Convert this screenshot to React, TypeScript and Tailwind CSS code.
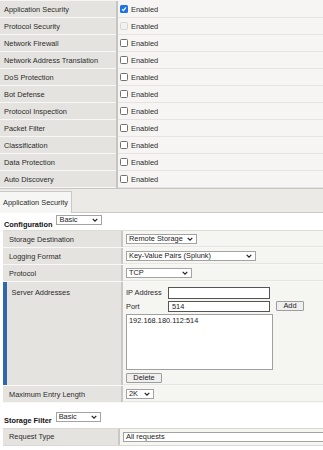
type BoxState = "checked" | "disabled" | "off";

const features: { name: string; state: BoxState }[] = [
  { name: "Application Security", state: "checked" },
  { name: "Protocol Security", state: "disabled" },
  { name: "Network Firewall", state: "off" },
  { name: "Network Address Translation", state: "off" },
  { name: "DoS Protection", state: "off" },
  { name: "Bot Defense", state: "off" },
  { name: "Protocol Inspection", state: "off" },
  { name: "Packet Filter", state: "off" },
  { name: "Classification", state: "off" },
  { name: "Data Protection", state: "off" },
  { name: "Auto Discovery", state: "off" },
];

function Box({ state }: { state: BoxState }) {
  if (state === "checked") {
    return (
      <span className="flex h-[8px] w-[8px] items-center justify-center rounded-[1.5px] bg-[#1a73e8]">
        <svg width="6" height="6" viewBox="0 0 6 6">
          <path d="M1 3.2 L2.4 4.6 L5 1.3" stroke="#fff" strokeWidth="1.2" fill="none" />
        </svg>
      </span>
    );
  }
  if (state === "disabled") {
    return <span className="h-[8px] w-[8px] rounded-[1.5px] border border-[#d6d6d4] bg-[#f1f1ef]" />;
  }
  return <span className="h-[8px] w-[8px] rounded-[1.5px] border border-[#707070] bg-white" />;
}

function Chevron() {
  return (
    <svg width="6" height="4" viewBox="0 0 6 4">
      <path d="M0.7 0.8 L3 3.1 L5.3 0.8" stroke="#222" strokeWidth="1.2" fill="none" />
    </svg>
  );
}

function Select({ value, width }: { value: string; width: string }) {
  return (
    <div
      className={`flex h-[10px] shrink-0 items-center justify-between border border-[#a3a3a3] bg-white pl-[2px] pr-[3px] leading-none text-[#222] ${width}`}
    >
      <span>{value}</span>
      <Chevron />
    </div>
  );
}

function Btn({ label, width }: { label: string; width: string }) {
  return (
    <div
      className={`flex h-[10px] items-center justify-center rounded-[1px] border border-[#9d9d9d] bg-[#efefef] leading-none text-[#222] ${width}`}
    >
      {label}
    </div>
  );
}

function Row2({ label, children }: { label: string; children: React.ReactNode }) {
  return (
    <div className="flex h-[17px] border-b border-[#f8f8f6]">
      <div className="flex w-[118px] items-center bg-[#e4e3df] pl-[6px]">{label}</div>
      <div className="w-[1.5px] bg-[#c9c8c4]" />
      <div className="flex flex-1 items-center border-b border-[#e6e5e1] bg-[#f5f5f2] pl-[3.5px]">
        {children}
      </div>
    </div>
  );
}

export default function App() {
  return (
    <div className="h-[450px] w-[323px] overflow-hidden bg-white font-['Liberation_Sans',Arial,sans-serif] text-[7.4px] leading-[9px] text-[#2b2b2b]">
      {/* feature toggles */}
      <div className="bg-[#f6f5f3] pt-px">
        {features.map((f) => (
          <div key={f.name} className="flex h-[17px]">
            <div className="flex w-[116px] items-center border-b border-[#f7f7f5] bg-[#e4e3df] pl-[4px]">
              {f.name}
            </div>
            <div className="w-[1.5px] bg-[#c6c5c1]" />
            <div className="flex flex-1 items-center gap-[3px] border-b border-[#e5e4e0] pl-[2.5px]">
              <Box state={f.state} />
              <span>Enabled</span>
            </div>
          </div>
        ))}
        <div className="h-px bg-[#c6c5c1]" />
      </div>

      {/* tab strip */}
      <div className="flex h-[24px] items-end border-b border-[#cbcac6] bg-[#ebeae6]">
        <div className="-mb-px flex h-[22px] w-[72px] items-center border-r border-t border-[#c9c8c4] bg-[#f6f6f4] pl-[3px]">
          Application Security
        </div>
      </div>

      {/* configuration */}
      <div className="flex h-[17px] items-start gap-[4px] pl-[4px] pt-[2px]">
        <span className="mt-[5px] text-[7.4px] font-bold text-[#111]">Configuration</span>
        <Select value="Basic" width="w-[46px]" />
      </div>

      <div className="ml-[3px] border-t border-[#dcdbd7]">
        <Row2 label="Storage Destination">
          <Select value="Remote Storage" width="w-[71px]" />
        </Row2>
        <Row2 label="Logging Format">
          <Select value="Key-Value Pairs (Splunk)" width="w-[130px]" />
        </Row2>
        <Row2 label="Protocol">
          <Select value="TCP" width="w-[66px]" />
        </Row2>

        {/* server addresses */}
        <div className="flex h-[104px] border-b border-[#f8f8f6]">
          <div className="flex w-[118px] bg-[#e4e3df]">
            <div className="w-[3.5px] bg-[#2f6aa6]" />
            <div className="pl-[5px] pt-[6px]">Server Addresses</div>
          </div>
          <div className="w-[1.5px] bg-[#c9c8c4]" />
          <div className="flex flex-1 flex-col border-b border-[#e6e5e1] bg-[#f5f5f2] pl-[3.5px] pt-[4.5px]">
            <div className="flex h-[12px] items-center">
              <span className="w-[42px]">IP Address</span>
              <div className="h-[12px] w-[102px] border-[1.5px] border-[#555] bg-white" />
            </div>
            <div className="mt-[2px] flex h-[11px] items-center">
              <span className="w-[42px]">Port</span>
              <div className="flex h-[11px] w-[102px] items-center border-[1.5px] border-[#555] bg-white pl-[3px] text-[#222]">
                514
              </div>
              <div className="ml-[6px]">
                <Btn label="Add" width="w-[28px]" />
              </div>
            </div>
            <div className="mt-[2.5px] h-[56px] w-[147px] border border-[#a0a0a0] bg-white pl-[2px] pt-[1px] text-[#222]">
              192.168.180.112:514
            </div>
            <div className="mt-[2.5px]">
              <Btn label="Delete" width="w-[36px]" />
            </div>
          </div>
        </div>

        <Row2 label="Maximum Entry Length">
          <Select value="2K" width="w-[28px]" />
        </Row2>
      </div>

      {/* storage filter */}
      <div className="flex h-[25px] items-start gap-[4px] pl-[4px] pt-[9px]">
        <span className="mt-[4px] text-[7.4px] font-bold text-[#111]">Storage Filter</span>
        <Select value="Basic" width="w-[45px]" />
      </div>

      <div className="ml-[3px] flex h-[17.5px] border-y border-[#d9d8d4]">
        <div className="flex w-[115px] items-center bg-[#e4e3df] pl-[6px]">Request Type</div>
        <div className="w-[1.5px] bg-[#c9c8c4]" />
        <div className="flex flex-1 items-center overflow-hidden bg-[#f5f5f2] pl-[3.5px]">
          <Select value="All requests" width="w-[230px]" />
        </div>
      </div>
    </div>
  );
}
